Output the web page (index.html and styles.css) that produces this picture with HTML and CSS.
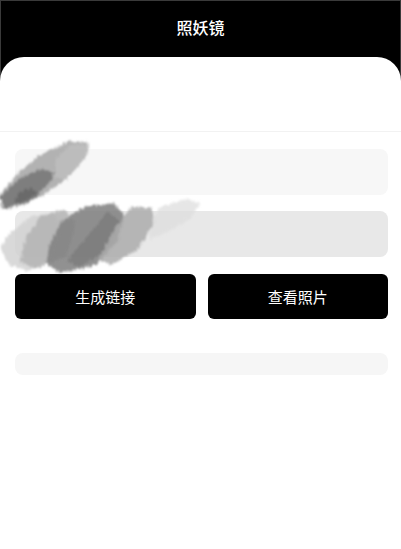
FILE: index.html
```html
<!DOCTYPE html>
<html lang="zh">
<head>
<meta charset="utf-8">
<title>照妖镜</title>
<link rel="stylesheet" href="styles.css">
</head>
<body>
<div class="page">
  <header class="topbar">
    <h1 class="title">照妖镜</h1>
  </header>
  <main class="card">
    <section class="intro"></section>
    <section class="form">
      <div class="field field-light"></div>
      <div class="field field-dark"></div>
      <div class="actions">
        <button class="btn">生成链接</button>
        <button class="btn">查看照片</button>
      </div>
      <div class="result"></div>
    </section>
    <svg class="smudge" width="210" height="140" viewBox="0 0 210 140" aria-hidden="true">
      <defs>
        <filter id="brush" x="-20%" y="-20%" width="140%" height="140%">
          <feTurbulence type="fractalNoise" baseFrequency="0.6 0.12" numOctaves="2" seed="7" result="n"/>
          <feDisplacementMap in="SourceGraphic" in2="n" scale="6" xChannelSelector="R" yChannelSelector="G" result="d"/>
          <feGaussianBlur in="d" stdDeviation="0.9"/>
        </filter>
      </defs>
      <g filter="url(#brush)">
        <!-- first stroke -->
        <polygon points="0,58 2,72 14,70 40,60 66,42 86,20 88,6 70,4 44,16 20,34" fill="#a0a0a0" opacity="0.8"/>
        <polygon points="0,60 4,72 26,64 46,50 56,36 40,32 18,42" fill="#6c6c6c" opacity="0.75"/>
        <polygon points="14,66 24,68 40,58 32,50 18,56" fill="#5e5e5e" opacity="0.6"/>
        <polygon points="54,40 64,42 84,22 88,8 70,8 56,22" fill="#c0c0c0" opacity="0.85"/>
        <!-- second stroke -->
        <polygon points="0,112 10,128 28,134 52,122 62,90 54,76 30,80 8,98" fill="#d2d2d2" opacity="0.85"/>
        <polygon points="20,124 34,132 66,120 76,86 64,72 40,80 26,100" fill="#b2b2b2" opacity="0.8"/>
        <polygon points="46,126 60,136 96,128 118,104 124,78 114,66 84,70 62,84 50,106" fill="#828282" opacity="0.88"/>
        <polygon points="66,124 80,130 110,112 120,84 108,74 90,96" fill="#707070" opacity="0.5"/>
        <polygon points="98,122 112,128 138,112 154,86 152,70 132,70 114,92" fill="#ababab" opacity="0.85"/>
        <polygon points="150,102 166,96 190,82 200,66 186,62 160,70 152,84" fill="#dedede" opacity="0.75"/>
      </g>
    </svg>
  </main>
</div>
</body>
</html>
```
FILE: styles.css
```css
* { box-sizing: border-box; }
html, body {
  margin: 0;
  padding: 0;
  background: #fff;
  font-family: "Noto Sans CJK SC", "Noto Sans", sans-serif;
}
.page {
  min-height: 549px;
  display: flex;
  flex-direction: column;
  background: #000;
  border-top: 1px solid #3a3a3a;
  border-left: 1px solid #3a3a3a;
  border-right: 1px solid #3a3a3a;
}
.topbar {
  height: 56px;
  display: flex;
  align-items: center;
  justify-content: center;
}
.title {
  margin: 0;
  color: #fff;
  font-size: 16px;
  font-weight: 500;
  line-height: 1;
  padding-bottom: 4px;
}
.card {
  flex: 1;
  position: relative;
  background: #fff;
  border-radius: 24px 24px 0 0;
  margin: 0 -1px;
}
.intro {
  height: 75px;
  border-bottom: 1px solid #f2f2f2;
}
.form {
  padding: 17px 13px 0 15px;
  display: flex;
  flex-direction: column;
}
.field {
  height: 46px;
  border-radius: 8px;
}
.field-light { background: #f7f7f7; }
.field-dark { background: #e8e8e8; margin-top: 16px; }
.actions {
  margin-top: 17px;
  display: flex;
  gap: 12px;
}
.btn {
  flex: 1;
  height: 45px;
  border: none;
  border-radius: 6px;
  background: #000;
  color: #fff;
  font-family: "Noto Sans CJK SC", "Noto Sans", sans-serif;
  font-size: 15px;
  padding: 0;
}
.result {
  margin-top: 34px;
  height: 22px;
  border-radius: 8px;
  background: #f6f6f6;
}
.smudge {
  position: absolute;
  left: 0;
  top: 80px;
  pointer-events: none;
}
```
